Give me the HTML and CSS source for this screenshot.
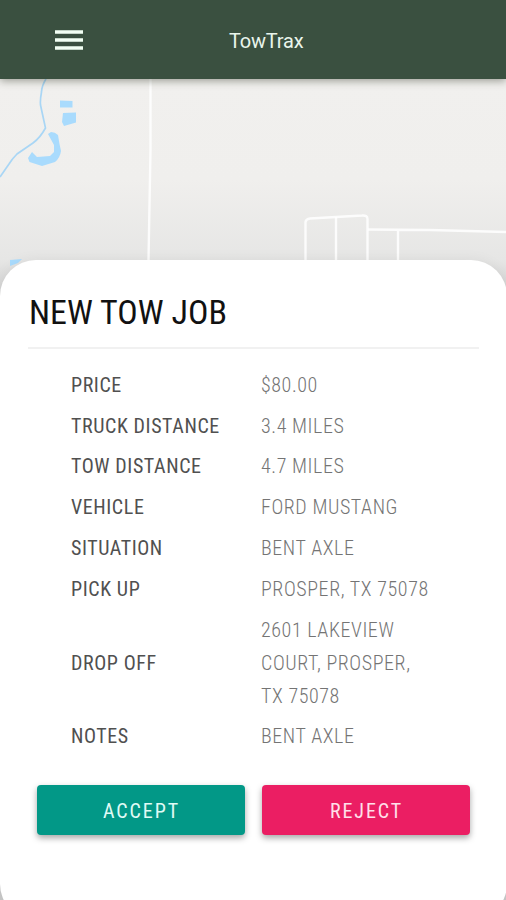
FILE: index.html
```html
<!DOCTYPE html>
<html lang="en">
<head>
<meta charset="utf-8">
<title>TowTrax</title>
<link rel="stylesheet" href="styles.css">
</head>
<body>
<div class="app">
  <header class="topbar">
    <button class="menu" aria-label="Menu">
      <svg width="28" height="21" viewBox="0 0 28 21"><path d="M0 2h28M0 10h28M0 18h28" stroke="#f2fff4" stroke-width="3.7"/></svg>
    </button>
    <h1 class="brand">TowTrax</h1>
  </header>
  <main class="stage">
    <svg class="map" width="506" height="821" viewBox="0 79 506 821" aria-hidden="true">
      <g fill="none" stroke="#fff" stroke-width="2.4" stroke-opacity=".85">
        <path d="M150.500 79V150L148.500 260"/>
        <path d="M305.500 262V222Q306 219 310 218.500L336 217L362 215.500Q367.500 215 367.500 219V262"/>
        <path d="M336 217V262M368 229.500L430 230L506 232M398 230V262"/>
      </g>
      <path d="M46 79Q42 85 41.500 92Q40 100 40.500 105L45.500 128Q40 138 33 143L17 154Q12 159 9 164L0 177" fill="none" stroke="#a9d6f5" stroke-width="1.700"/>
      <g fill="#a9dbfd">
        <path d="M60 100.500L72.500 101V107.500H60Z"/>
        <path d="M63 113L76 112.500V122.500L64 126L62 122Z"/>
        <path d="M48 134L51 132Q55 132 58 135L59.500 144L61 151Q60 158 55 162L42 166L29.500 162L28 158L32 152L37 157L50 156L54 152V145Z"/>
        <path d="M10 260L22 259L18 263L10 266Z"/>
      </g>
    </svg>
    <section class="sheet">
      <h2 class="title">NEW TOW JOB</h2>
      <dl class="details">
        <div class="row"><dt>PRICE</dt><dd>$80.00</dd></div>
        <div class="row"><dt>TRUCK DISTANCE</dt><dd>3.4 MILES</dd></div>
        <div class="row"><dt>TOW DISTANCE</dt><dd>4.7 MILES</dd></div>
        <div class="row"><dt>VEHICLE</dt><dd>FORD MUSTANG</dd></div>
        <div class="row"><dt>SITUATION</dt><dd>BENT AXLE</dd></div>
        <div class="row"><dt>PICK UP</dt><dd>PROSPER, TX 75078</dd></div>
        <div class="row"><dt>DROP OFF</dt><dd>2601 LAKEVIEW<br>COURT, PROSPER,<br>TX 75078</dd></div>
        <div class="row"><dt>NOTES</dt><dd>BENT AXLE</dd></div>
      </dl>
      <div class="actions">
        <button class="btn accept">ACCEPT</button>
        <button class="btn reject">REJECT</button>
      </div>
    </section>
  </main>
</div>
</body>
</html>
```
FILE: styles.css
```css
* { box-sizing: border-box; }
body { margin: 0; font-family: "Roboto Condensed", Roboto, "Liberation Sans", sans-serif; }
h1, h2, dl, dd { margin: 0; }
button { border: 0; padding: 0; font: inherit; }
.app { height: 900px; overflow: hidden; display: flex; flex-direction: column; }
.topbar {
  height: 79px; flex: none; background: #3a5040; z-index: 1; position: relative;
  box-shadow: 0 2px 8px rgba(50, 55, 40, .45);
  display: grid; grid-template-columns: 55px 28px 1fr; align-items: center;
}
.menu { grid-column: 2; background: none; height: 21px; margin-top: 2px; }
.menu svg { display: block; }
.brand { padding: 3px 0 0 146px; font: 400 20px/26px Roboto, sans-serif; color: #e9f5ec; letter-spacing: -.2px; }
.stage { flex: 1; display: grid; background: linear-gradient(#f1f0ee 0, #f0efed 100px, #e6e6e5 181px, #c8c8c8 230px); }
.map, .sheet { grid-area: 1 / 1; }
.map { display: block; }
.sheet {
  margin-top: 181px; height: 660px; padding: 0 28px; background: #fff;
  border-radius: 36px; box-shadow: 0 0 14px rgba(0, 0, 0, .06);
  font-stretch: 75%; z-index: 0;
}
.title {
  height: 89px; border-bottom: 2px solid #f1f1f1; padding: 30px 0 0 1px;
  font-size: 34px; line-height: 44px; font-weight: 400; color: #111; letter-spacing: .02px;
}
.details { padding: 16px 0 0 43px; }
.row { display: grid; grid-template-columns: 190px 1fr; align-items: center; padding: 3.900px 0; font-size: 20px; line-height: 33px; letter-spacing: .58px; }
.row dt { color: #505050; }
.row dd { color: #747474; font-weight: 300; }
.actions { display: grid; grid-template-columns: 208px 208px; gap: 17px; padding: 28px 9px 0; }
.btn { height: 50px; border-radius: 4px; color: #e0fbf6; font-size: 20px; letter-spacing: 1.900px; padding: 2px 0 0 1px; box-shadow: 0 3px 6px rgba(0, 0, 0, .35); }
.accept { background: #029887; }
.reject { background: #eb1e63; color: #ffe0ea; }
```
